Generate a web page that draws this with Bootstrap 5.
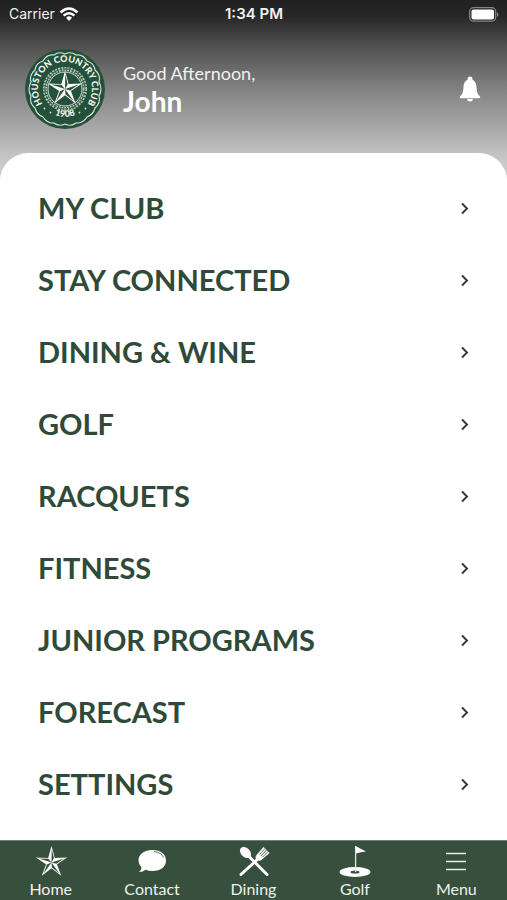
<!DOCTYPE html>
<html lang="en">
<head>
<meta charset="utf-8">
<meta name="viewport" content="width=device-width, initial-scale=1">
<title>Houston Country Club</title>
<link rel="stylesheet" href="https://cdn.jsdelivr.net/npm/bootstrap@5.3.0/dist/css/bootstrap.min.css">
<style>
  body { font-family: Lato, sans-serif; background: #fff; }
  .hero { background: linear-gradient(#212121 0, #272727 16px, #3c3c3c 32px, #555 50px, #888 95px, #aaa 130px, #c4c4c6 156px, #d2d2d4 180px); }
  .status { font-family: Inter, "Liberation Sans", sans-serif; font-size: 14px; line-height: 20px; height: 28px; padding: 0 8px 0 9px; color: #f2f2f2; }
  .status .clock { font-size: 15px; font-weight: 600; }
  .profile { height: 125px; padding: 0 26px 3px 25px; }
  .greeting { font-size: 18px; line-height: 24px; color: #f1f1f1; }
  .member { font-size: 28px; line-height: 32px; font-weight: 700; color: #fff; }
  .who { padding-left: 18px; }
  .bell { line-height: 0; }
  .sheet { border-radius: 28px 28px 0 0; padding: 19px 0 20px; }
  .menu-link { height: 72px; padding: 0 38px; font-size: 29px; line-height: 36px; font-weight: 700; color: #2f4a39; text-decoration: none; }
  .tabs { background: #374f3d; border-top: 1px solid #6f8073; height: 60px; }
  .tabs a { color: #eef2ee; font-size: 16px; line-height: 20px; padding-top: 4px; text-decoration: none; }
</style>
<script src="https://cdn.jsdelivr.net/npm/bootstrap@5.3.0/dist/js/bootstrap.bundle.min.js"></script>
</head>
<body class="d-flex flex-column min-vh-100">
<svg class="d-none" aria-hidden="true">
  <symbol id="star" viewBox="-100 -100 200 200">
    <path fill="#fff" d="M0-100 20-28 95-31 33 11 59 81 0 35-59 81-33 11-95-31-20-28Z"/>
    <path fill="#35503e" d="M0 0 1-80 15-27ZM0 0 76-25 29 8ZM0 0 48 66 2 29ZM0 0-48 66-28 12ZM0 0-76-25-20-23Z"/>
  </symbol>
  <symbol id="chevron" viewBox="0 0 8 14">
    <path fill="none" stroke="#333b36" stroke-width="2" d="M1 2.500 6 7.500 1 12.500"/>
  </symbol>
</svg>

<div class="hero flex-grow-1 d-flex flex-column">
  <div class="status row g-0 align-items-center">
    <div class="col d-flex align-items-center gap-1">
      <span>Carrier</span>
      <svg width="20" height="15" viewBox="0 0 20 15" role="img" aria-label="Wi-Fi">
        <g fill="none" stroke="#fff" stroke-width="2.5"><path d="M1.500 5.500Q10-2.500 18.500 5.500M4.600 8.700Q10 3.700 15.400 8.700"/></g>
        <path fill="#fff" d="M7 10.700Q10 8 13 10.700L10 14Z"/>
      </svg>
    </div>
    <div class="col-auto clock">1:34 PM</div>
    <div class="col text-end lh-1">
      <svg width="30" height="15" viewBox="0 0 30 15" role="img" aria-label="Battery full">
        <rect x=".7" y=".7" width="26" height="13.500" rx="4" fill="none" stroke="#858585" stroke-width="1.300"/>
        <rect x="2.500" y="2.500" width="22.500" height="10" rx="2" fill="#fff"/>
        <path fill="#858585" d="M28 5Q31 7.500 28 10Z"/>
      </svg>
    </div>
  </div>

  <header class="profile d-flex align-items-center">
    <svg class="flex-shrink-0" width="80" height="80" viewBox="0 0 80 80" role="img" aria-label="Houston Country Club 1908">
      <defs>
        <path id="arc-top" d="M21 59A27 27 0 1 1 59 59"/>
        <path id="arc-low" d="M14 51A28.500 28.500 0 0 0 66 51"/>
      </defs>
      <circle cx="40" cy="40" r="40" fill="#24513a"/>
      <path fill="none" stroke="#dce5de" stroke-width="1.100" d="M40 5Q46 2 51 6 58 5 62 12 69 14 70 21 76 26 74 33 78 40 74 47 76 54 70 59 68 66 62 68 58 74.500 51 74 46 78 40 75 34 78 29 74 22 74.500 18 68 12 66 10 59 4 54 6 47 2 40 6 33 4 26 10 21 11 14 18 12 22 5 29 6 34 2 40 5Z"/>
      <g font-family="Lato, sans-serif" font-weight="900" fill="#f3f6f3">
        <text font-size="9"><textPath href="#arc-top" startOffset="50%" text-anchor="middle">HOUSTON COUNTRY CLUB</textPath></text>
        <text font-size="9"><textPath href="#arc-low" startOffset="50%" text-anchor="middle">1908</textPath></text>
      </g>
      <g fill="#dce5de"><circle cx="25.500" cy="63.500" r=".9"/><circle cx="19.500" cy="59.500" r=".9"/><circle cx="14.500" cy="55" r=".9"/><circle cx="54.500" cy="63.500" r=".9"/><circle cx="60.500" cy="59.500" r=".9"/><circle cx="65.500" cy="55" r=".9"/></g>
      <circle cx="40" cy="40" r="20" fill="none" stroke="#b9c9bf" stroke-width="4" stroke-dasharray="2 1"/>
      <circle cx="40" cy="40" r="20" fill="none" stroke="#40664f" stroke-width="1.300" stroke-dasharray="3 1"/>
      <circle cx="40" cy="40" r="17" fill="#24513a" stroke="#d3ded6"/>
      <use href="#star" x="22" y="22" width="36" height="36"/>
    </svg>
    <div class="who flex-grow-1">
      <div class="greeting">Good Afternoon,</div>
      <div class="member">John</div>
    </div>
    <button type="button" class="bell btn p-0 border-0" aria-label="Notifications">
      <svg width="22" height="26" viewBox="0 0 22 26" fill="#fff">
        <circle cx="11" cy="3" r="2.500"/>
        <path d="M11 3.500C15.500 3.500 17.300 7 17.500 11 17.700 16 18.500 18 21 20.500Q22 22 20 22.300H2Q0 22 1 20.500C3.500 18 4.300 16 4.500 11 4.700 7 6.500 3.500 11 3.500ZM8 23H14Q13.500 25.500 11 25.500T8 23Z"/>
      </svg>
    </button>
  </header>

  <main class="sheet bg-white flex-grow-1">
    <nav class="d-flex flex-column" aria-label="Main menu">
      <a class="menu-link d-flex align-items-center justify-content-between" href="#club">MY CLUB <svg width="8" height="14"><use href="#chevron"/></svg></a>
      <a class="menu-link d-flex align-items-center justify-content-between" href="#connected">STAY CONNECTED <svg width="8" height="14"><use href="#chevron"/></svg></a>
      <a class="menu-link d-flex align-items-center justify-content-between" href="#wine">DINING &amp; WINE <svg width="8" height="14"><use href="#chevron"/></svg></a>
      <a class="menu-link d-flex align-items-center justify-content-between" href="#golf">GOLF <svg width="8" height="14"><use href="#chevron"/></svg></a>
      <a class="menu-link d-flex align-items-center justify-content-between" href="#racquets">RACQUETS <svg width="8" height="14"><use href="#chevron"/></svg></a>
      <a class="menu-link d-flex align-items-center justify-content-between" href="#fitness">FITNESS <svg width="8" height="14"><use href="#chevron"/></svg></a>
      <a class="menu-link d-flex align-items-center justify-content-between" href="#junior">JUNIOR PROGRAMS <svg width="8" height="14"><use href="#chevron"/></svg></a>
      <a class="menu-link d-flex align-items-center justify-content-between" href="#forecast">FORECAST <svg width="8" height="14"><use href="#chevron"/></svg></a>
      <a class="menu-link d-flex align-items-center justify-content-between" href="#settings">SETTINGS <svg width="8" height="14"><use href="#chevron"/></svg></a>
    </nav>
  </main>
</div>

<nav class="tabs row g-0 sticky-bottom text-center" aria-label="Tabs">
  <a class="col d-flex flex-column align-items-center" href="#home">
    <svg width="34" height="34" viewBox="0 0 34 34"><use href="#star" x="1" y="1" width="33" height="33"/></svg>Home</a>
  <a class="col d-flex flex-column align-items-center" href="#contact">
    <svg width="34" height="34" viewBox="0 0 34 34">
      <path fill="#fff" d="M17.500 5C26 5 31 9.500 31 15.500S26 26 17.500 26Q13.500 26 10.500 24.800 8 27 4 27 6.500 25 6.500 22.500 3.500 19.500 3.500 15.500C3.500 9.500 9 5 17.500 5Z"/>
      <path fill="none" stroke="#526b58" d="M19 6.500Q26.500 7.500 28.500 12.500"/>
    </svg>Contact</a>
  <a class="col d-flex flex-column align-items-center" href="#dining">
    <svg width="34" height="34" viewBox="0 0 34 34">
      <path stroke="#fff" stroke-width="3" stroke-linecap="round" d="M11 10.500 30 29.500M22.500 12.500 4 29.500"/>
      <ellipse cx="8.500" cy="7.500" rx="4.500" ry="6.500" transform="rotate(-45 8.500 7.500)" fill="#fff"/>
      <path fill="#fff" d="M19.500 10 26.500 2 32.500 8 25 14.500Q22 17 19.500 14.500 17.500 12.500 19.500 10Z"/>
      <path stroke="#374f3d" stroke-width=".8" d="M28 3.500 22.500 9.500M29.500 5 24 11M31 6.500 25.500 12.200"/>
    </svg>Dining</a>
  <a class="col d-flex flex-column align-items-center" href="#tee">
    <svg width="34" height="34" viewBox="0 0 34 34">
      <ellipse cx="17" cy="27" rx="15.500" ry="5" fill="#fff"/>
      <ellipse cx="17" cy="27" rx="4.500" ry="1.600" fill="#374f3d"/>
      <path stroke="#dfe6e0" stroke-width="1.300" d="M17.600 1V27"/>
      <path fill="#fff" d="M17.500 1 28 6.500Q23 7 18 8.500Z"/>
    </svg>Golf</a>
  <a class="col d-flex flex-column align-items-center" href="#menu">
    <svg width="34" height="34" viewBox="0 0 34 34"><path stroke="#e9eeea" stroke-width="1.500" d="M7 8.500H27M7 16.500H27M7 24.500H27"/></svg>Menu</a>
</nav>
</body>
</html>
